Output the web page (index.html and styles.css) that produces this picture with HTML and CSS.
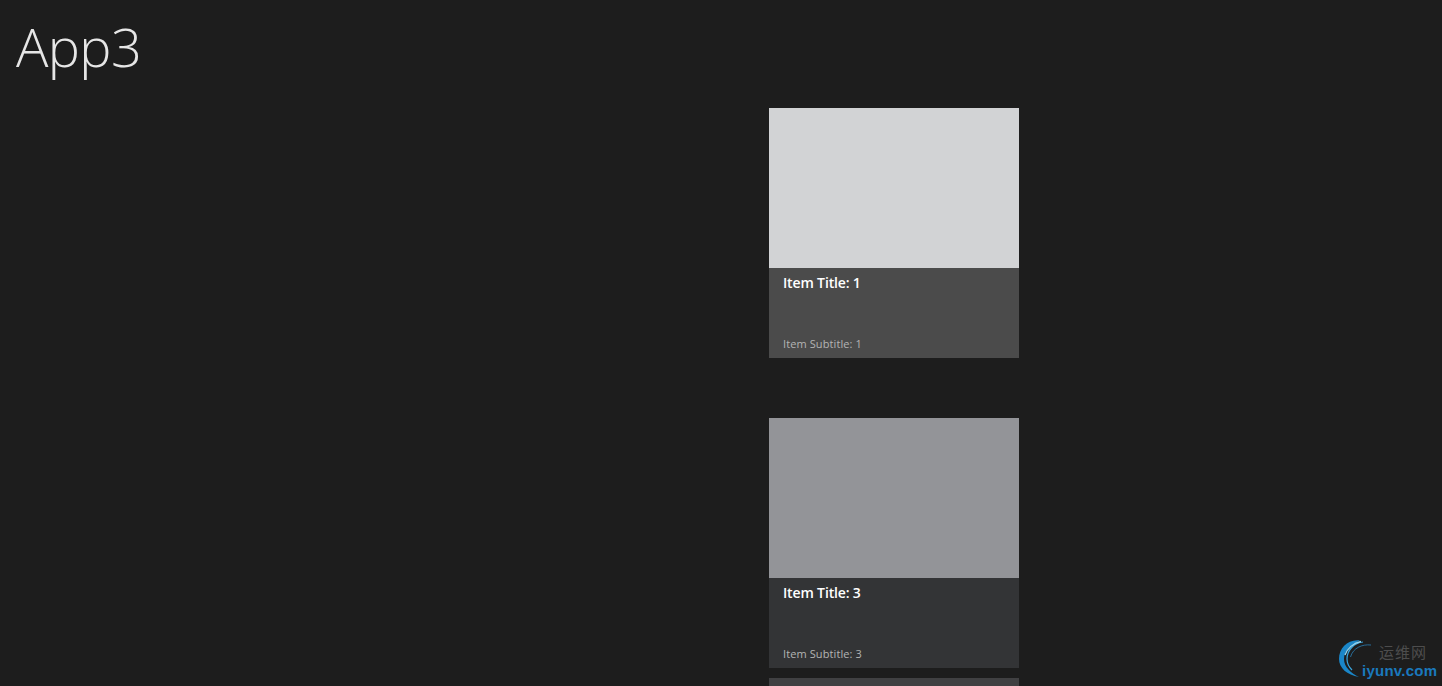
FILE: index.html
```html
<!DOCTYPE html>
<html lang="en">
<head>
<meta charset="utf-8">
<title>App3</title>
<link rel="stylesheet" href="styles.css">
</head>
<body>
<header class="header"><h1 class="app-title">App3</h1></header>
<main class="list">
  <article class="card card-1">
    <div class="thumb"></div>
    <div class="info"><div class="item-title">Item Title: 1</div><div class="item-sub">Item Subtitle: 1</div></div>
  </article>
  <article class="card card-3">
    <div class="thumb"></div>
    <div class="info"><div class="item-title">Item Title: 3</div><div class="item-sub">Item Subtitle: 3</div></div>
  </article>
  <div class="next-card"></div>
</main>
<div class="watermark">
  <svg class="wm-logo" width="42" height="42" viewBox="0 0 42 42" aria-hidden="true">
    <path d="M22 1.500C10 0 1 9 1 20C1 29 9 36 21 38C13 34 6 28 6 20C6 12 13 5 22 1.500Z" fill="#1a86c8"/>
    <path d="M25 3C16 4 9 11 9 20C9 24 11 28 14 31" fill="none" stroke="#3aa6de" stroke-width="1.2"/>
    <path d="M7 16C9 10 15 4 23 2.500" fill="none" stroke="#8fd4f2" stroke-width="1.300"/>
    <path d="M33 6C24 5 15 9 12.500 18" fill="none" stroke="#2a7fb5" stroke-width="0.8"/>
  </svg>
  <span class="wm-cn">运维网</span>
  <span class="wm-en">iyunv.com</span>
</div>
</body>
</html>
```
FILE: styles.css
```css
html, body {
  margin: 0;
  padding: 0;
  height: 686px;
  overflow: hidden;
  background: #1d1d1d;
  font-family: "Open Sans", "Liberation Sans", sans-serif;
}
.header {
  height: 108px;
  padding-left: 16px;
}
.app-title {
  margin: 0;
  padding-top: 8px;
  font-size: 54px;
  line-height: 76px;
  font-weight: 300;
  color: #e6e6e6;
  letter-spacing: -0.6px;
}
.list {
  display: flex;
  flex-direction: column;
  margin-left: 769px;
  width: 250px;
}
.card {
  display: flex;
  flex-direction: column;
  height: 250px;
}
.card-1 { margin-bottom: 60px; }
.card-3 { margin-bottom: 10px; }
.thumb { height: 160px; }
.info {
  flex: 1;
  display: flex;
  flex-direction: column;
  justify-content: space-between;
  padding: 5px 14px 6px;
}
.card-1 .thumb { background: #d2d3d5; }
.card-1 .info { background: #4b4b4b; }
.card-3 .thumb { background: #939498; }
.card-3 .info { background: #333436; }
.item-title {
  font-size: 14px;
  line-height: 19px;
  font-weight: 600;
  color: #ffffff;
  letter-spacing: -0.15px;
}
.item-sub {
  font-size: 11px;
  line-height: 16px;
  color: #b4b4b4;
  letter-spacing: 0.1px;
}
.next-card {
  height: 8px;
  background: #404042;
}
.watermark {
  position: absolute;
  left: 1338px;
  top: 639px;
  width: 104px;
  height: 47px;
}
.wm-logo {
  position: absolute;
  left: 0;
  top: 0;
}
.wm-cn {
  position: absolute;
  left: 41px;
  top: 5px;
  font-family: "Noto Sans CJK SC", sans-serif;
  font-size: 15px;
  line-height: 15px;
  letter-spacing: 1px;
  color: #4d4d4d;
}
.wm-en {
  position: absolute;
  left: 24px;
  top: 24px;
  font-family: "Liberation Sans", sans-serif;
  font-size: 15px;
  font-weight: 700;
  line-height: 15px;
  color: #1a79bd;
  letter-spacing: 0.25px;
  white-space: nowrap;
}
```
